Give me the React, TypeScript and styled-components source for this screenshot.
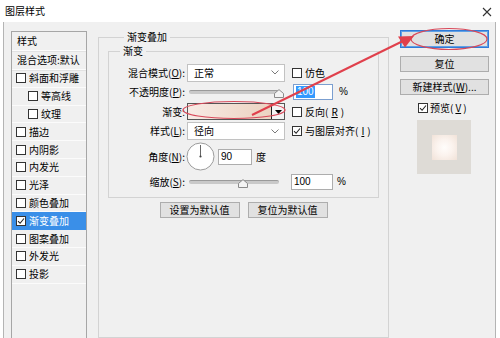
import React from 'react';
import styled, { createGlobalStyle } from 'styled-components';

const Global = createGlobalStyle`
  html, body { margin: 0; padding: 0; background: #ffffff; }
  body {
    font-family: "Noto Sans CJK SC", "Liberation Sans", sans-serif;
    font-size: 10px;
    color: #000;
  }
  * { box-sizing: border-box; }
`;

const Window = styled.div`
  position: relative;
  width: 500px;
  height: 338px;
  overflow: hidden;
  background: #ffffff;
  display: flex;
  flex-direction: column;
`;

const TitleBar = styled.div`
  height: 22px;
  flex: none;
  display: flex;
  align-items: center;
  justify-content: space-between;
  padding: 0 8px 0 5px;
  font-size: 10px;
  line-height: 14px;
`;

const CloseGlyph = styled.svg`
  width: 10px;
  height: 10px;
  margin-top: 1px;
`;

const Body = styled.div`
  flex: 1;
  min-height: 0;
  margin: 0 4px 0 3px;
  border-left: 1px solid #b4b4b4;
  border-right: 1px solid #b4b4b4;
  background: #f0f0f0;
  display: flex;
  padding: 9px 0 0 7px;
`;

/* ---------- sidebar ---------- */
const Sidebar = styled.div`
  width: 76px;
  flex: none;
  border: 1px solid #a6a6a6;
  border-bottom: none;
  background: #f0f0f0;
  display: flex;
  flex-direction: column;
  overflow: hidden;
`;

const SideHead = styled.div<{ $h: number }>`
  height: ${(p) => p.$h}px;
  flex: none;
  display: flex;
  align-items: center;
  padding-left: 5px;
  white-space: nowrap;
  border-bottom: 1px solid #fcfcfc;
  box-shadow: 0 1px 0 #e2e2e2;
  line-height: 12px;
`;

const SideItem = styled.div<{ $indent?: boolean; $selected?: boolean }>`
  height: 17.8px;
  flex: none;
  display: flex;
  align-items: center;
  gap: 3px;
  padding-left: ${(p) => (p.$indent ? 16 : 4)}px;
  white-space: nowrap;
  line-height: 12px;
  background: ${(p) => (p.$selected ? '#3a8fe8' : 'transparent')};
  color: ${(p) => (p.$selected ? '#ffffff' : '#000')};
  border-bottom: 1px solid ${(p) => (p.$selected ? '#3a8fe8' : '#fbfbfb')};
`;

/* ---------- checkbox ---------- */
const Box = styled.span`
  width: 10px;
  height: 10px;
  flex: none;
  border: 1px solid #333;
  background: #fff;
  display: inline-flex;
  align-items: center;
  justify-content: center;
`;

const Check: React.FC<{ checked?: boolean }> = ({ checked }) => (
  <Box>
    {checked && (
      <svg width="8" height="8" viewBox="0 0 8 8">
        <path d="M1 4.2 L3.1 6.3 L7 1.5" fill="none" stroke="#222" strokeWidth="1.1" />
      </svg>
    )}
  </Box>
);

/* ---------- middle ---------- */
const Main = styled.div`
  width: 291px;
  flex: none;
  margin-left: 11px;
  display: flex;
  flex-direction: column;
`;

const Group = styled.section`
  border: 1px solid #d3d3d3;
  display: flex;
  flex-direction: column;
`;

const OuterGroup = styled(Group)`
  margin-top: 6px;
  height: 400px;
  padding: 0 9px;
`;

const InnerGroup = styled(Group)`
  margin-top: 8px;
  padding: 0 0 6px 0;
  gap: 1.5px;
`;

const GroupTitle = styled.div<{ $ml: number }>`
  align-self: flex-start;
  margin: -7px 0 0 ${(p) => p.$ml}px;
  padding: 0 3px;
  background: #f0f0f0;
  line-height: 12px;
  height: 12px;
  font-size: 10px;
  white-space: nowrap;
`;

const Spacer = styled.div<{ $h: number }>`
  height: ${(p) => p.$h}px;
  flex: none;
`;

const Row = styled.div<{ $h?: number }>`
  height: ${(p) => p.$h ?? 18}px;
  flex: none;
  display: flex;
  align-items: center;
  line-height: 12px;
`;

const Label = styled.div`
  width: 76px;
  flex: none;
  text-align: right;
  margin-right: 2px;
  white-space: nowrap;
`;

const U = styled.span`
  text-decoration: underline;
  text-underline-offset: 1px;
`;

const Select = styled.div`
  width: 98px;
  height: 18px;
  flex: none;
  background: #fff;
  border: 1px solid #c2c2c2;
  display: flex;
  align-items: center;
  justify-content: space-between;
  padding: 0 5px 0 6px;
`;

const SliderWrap = styled.div`
  width: 98px;
  height: 18px;
  flex: none;
  padding: 0 6px 0 2px;
  display: flex;
  align-items: center;
`;

const Track = styled.div`
  position: relative;
  flex: 1;
  height: 4px;
  background: #c9c9c9;
  border-top: 1px solid #9a9a9a;
  border-radius: 2px;
`;

const Thumb = styled.svg`
  position: absolute;
  top: -2px;
  width: 10px;
  height: 9px;
  margin-left: -5px;
`;

const Slider: React.FC<{ pos: number }> = ({ pos }) => (
  <SliderWrap>
    <Track>
      <Thumb viewBox="0 0 10 9" style={{ left: `${pos}%` }}>
        <path d="M0.5 8.5 L0.5 4.5 L5 0.6 L9.5 4.5 L9.5 8.5 Z" fill="#f4f4f4" stroke="#8a8a8a" strokeWidth="1" />
      </Thumb>
    </Track>
  </SliderWrap>
);

const TextInput = styled.div<{ $w: number; $ml: number; $focus?: boolean }>`
  width: ${(p) => p.$w}px;
  margin-left: ${(p) => p.$ml}px;
  height: 16px;
  flex: none;
  background: #fff;
  border: 1px solid ${(p) => (p.$focus ? '#7b9fd0' : '#adadad')};
  display: flex;
  align-items: center;
  padding-left: 2px;
  font-family: "Liberation Sans", sans-serif;
  font-size: 10px;
`;

const Selected = styled.span`
  background: #3399ff;
  color: #fff;
  padding: 0 1px;
  line-height: 12px;
`;

const Unit = styled.span<{ $ml: number }>`
  margin-left: ${(p) => p.$ml}px;
  font-family: "Liberation Sans", sans-serif;
`;

const UnitCJK = styled.span<{ $ml: number }>`
  margin-left: ${(p) => p.$ml}px;
`;

const CheckField = styled.label<{ $ml: number }>`
  margin-left: ${(p) => p.$ml}px;
  display: flex;
  align-items: center;
  gap: 3px;
  white-space: nowrap;
`;

const Swatch = styled.div`
  width: 98px;
  height: 17px;
  flex: none;
  display: flex;
  border: 1px solid #555;
`;

const SwatchFill = styled.div`
  flex: 1;
  background: linear-gradient(to right, #f7ebe5, #efd9cb 70%, #ecd3c2);
`;

const SwatchDrop = styled.div`
  width: 13px;
  flex: none;
  border-left: 1px solid #222;
  background: #f3f3f3;
  display: flex;
  align-items: center;
  justify-content: center;
`;

const Dial = styled.svg`
  width: 29px;
  height: 29px;
  flex: none;
  margin-left: -1px;
`;

const ButtonRow = styled.div`
  display: flex;
  justify-content: center;
  gap: 8px;
  margin-top: 4px;
`;

const Button = styled.div<{ $w?: number; $h?: number; $mt?: number; $focus?: boolean }>`
  width: ${(p) => (p.$w ? `${p.$w}px` : 'auto')};
  height: ${(p) => p.$h ?? 16}px;
  margin-top: ${(p) => p.$mt ?? 0}px;
  flex: none;
  background: #e1e1e1;
  border: 1px solid ${(p) => (p.$focus ? '#2f7bd8' : '#adadad')};
  box-shadow: ${(p) => (p.$focus ? 'inset 0 0 0 1px #5fa0e6' : 'none')};
  display: flex;
  align-items: center;
  justify-content: center;
  line-height: 12px;
  white-space: nowrap;
`;

/* ---------- right ---------- */
const Side = styled.div`
  width: 89px;
  flex: none;
  margin-left: 11px;
  display: flex;
  flex-direction: column;
`;

const PreviewCheck = styled.label`
  margin-top: 7px;
  padding-left: 18px;
  height: 12px;
  display: flex;
  align-items: center;
  gap: 2px;
  line-height: 12px;
`;

const PreviewBox = styled.div`
  margin: 6px 0 0 17px;
  width: 54px;
  height: 54px;
  background: #dedbd6;
  display: flex;
  align-items: center;
  justify-content: center;
`;

const PreviewInner = styled.div`
  width: 25px;
  height: 25px;
  background: radial-gradient(circle, #fffdfb 0%, #fbf3ee 45%, #f1e2d8 100%);
`;

/* ---------- annotation overlay ---------- */
const Overlay = styled.svg`
  position: absolute;
  left: 0;
  top: 0;
  width: 500px;
  height: 338px;
  pointer-events: none;
`;

const Chevron = () => (
  <svg width="8" height="5" viewBox="0 0 8 5">
    <path d="M0.5 0.5 L4 4 L7.5 0.5" fill="none" stroke="#7a7a7a" strokeWidth="1" />
  </svg>
);

const sideItems: { t: string; indent?: boolean; sel?: boolean }[] = [
  { t: '斜面和浮雕' },
  { t: '等高线', indent: true },
  { t: '纹理', indent: true },
  { t: '描边' },
  { t: '内阴影' },
  { t: '内发光' },
  { t: '光泽' },
  { t: '颜色叠加' },
  { t: '渐变叠加', sel: true },
  { t: '图案叠加' },
  { t: '外发光' },
  { t: '投影' },
];

export default function App() {
  return (
    <>
      <Global />
      <Window>
        <TitleBar>
          <span>图层样式</span>
          <CloseGlyph viewBox="0 0 10 10">
            <path d="M1 1 L9 9 M9 1 L1 9" stroke="#333" strokeWidth="1.1" />
          </CloseGlyph>
        </TitleBar>
        <Body>
          <Sidebar>
            <SideHead $h={19}>样式</SideHead>
            <SideHead $h={19}>混合选项:默认</SideHead>
            {sideItems.map((it) => (
              <SideItem key={it.t} $indent={it.indent} $selected={it.sel}>
                <Check checked={it.sel} />
                <span>{it.t}</span>
              </SideItem>
            ))}
          </Sidebar>

          <Main>
            <OuterGroup>
              <GroupTitle $ml={16}>渐变叠加</GroupTitle>
              <InnerGroup>
                <GroupTitle $ml={11}>渐变</GroupTitle>
                <Spacer $h={3.5} />
                <Row>
                  <Label>
                    混合模式(<U>O</U>):
                  </Label>
                  <Select>
                    <span>正常</span>
                    <Chevron />
                  </Select>
                  <CheckField $ml={7}>
                    <Check />
                    仿色
                  </CheckField>
                </Row>
                <Row>
                  <Label>
                    不透明度(<U>P</U>):
                  </Label>
                  <Slider pos={100} />
                  <TextInput $w={40} $ml={8} $focus>
                    <Selected>100</Selected>
                  </TextInput>
                  <Unit $ml={6}>%</Unit>
                </Row>
                <Row>
                  <Label>渐变:</Label>
                  <Swatch>
                    <SwatchFill />
                    <SwatchDrop>
                      <svg width="7" height="4" viewBox="0 0 7 4">
                        <path d="M0 0 L7 0 L3.5 4 Z" fill="#000" />
                      </svg>
                    </SwatchDrop>
                  </Swatch>
                  <CheckField $ml={7}>
                    <Check />
                    反向(<U>R</U>)
                  </CheckField>
                </Row>
                <Row>
                  <Label>
                    样式(<U>L</U>):
                  </Label>
                  <Select>
                    <span>径向</span>
                    <Chevron />
                  </Select>
                  <CheckField $ml={7}>
                    <Check checked />
                    与图层对齐(<U>I</U>)
                  </CheckField>
                </Row>
                <Row $h={30}>
                  <Label>
                    角度(<U>N</U>):
                  </Label>
                  <Dial viewBox="0 0 29 29">
                    <circle cx="14.5" cy="14.5" r="13.5" fill="#fff" stroke="#9c9c9c" strokeWidth="1" />
                    <line x1="14.5" y1="14.5" x2="14.5" y2="3" stroke="#666" strokeWidth="1" />
                    <circle cx="14.5" cy="14.5" r="1.1" fill="#444" />
                  </Dial>
                  <TextInput $w={34} $ml={3}>90</TextInput>
                  <UnitCJK $ml={4}>度</UnitCJK>
                </Row>
                <Row>
                  <Label>
                    缩放(<U>S</U>):
                  </Label>
                  <Slider pos={60} />
                  <TextInput $w={42} $ml={6}>100</TextInput>
                  <Unit $ml={4}>%</Unit>
                </Row>
              </InnerGroup>
              <ButtonRow>
                <Button $w={80}>设置为默认值</Button>
                <Button $w={80}>复位为默认值</Button>
              </ButtonRow>
            </OuterGroup>
          </Main>

          <Side>
            <Button $h={18} $mt={-1} $focus>
              确定
            </Button>
            <Button $h={16} $mt={8}>
              复位
            </Button>
            <Button $h={16} $mt={7}>
              新建样式(<U>W</U>)...
            </Button>
            <PreviewCheck>
              <Check checked />
              预览(<U>V</U>)
            </PreviewCheck>
            <PreviewBox>
              <PreviewInner />
            </PreviewBox>
          </Side>
        </Body>

        <Overlay viewBox="0 0 500 338">
          <ellipse cx="234" cy="110" rx="51" ry="8.5" fill="none" stroke="#d8495a" strokeWidth="1.2" />
          <ellipse cx="449" cy="39" rx="38" ry="10.5" fill="none" stroke="#d8495a" strokeWidth="1.2" />
          <line x1="252" y1="115" x2="403" y2="41" stroke="#e0404c" strokeWidth="2" />
          <path d="M414 36 L398 36.5 L405 47.5 Z" fill="#e0404c" />
        </Overlay>
      </Window>
    </>
  );
}
